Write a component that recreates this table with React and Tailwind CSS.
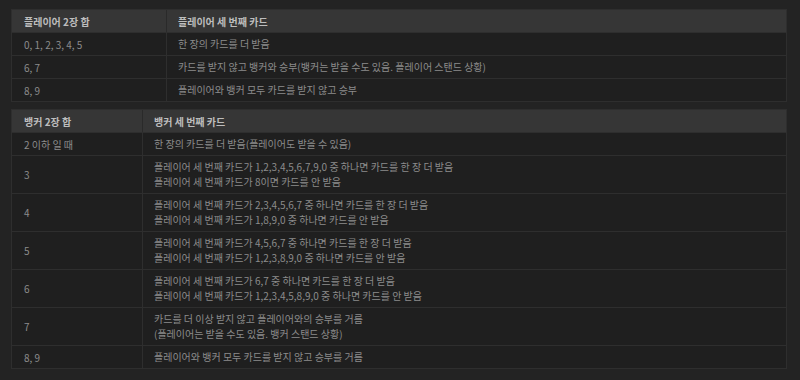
const F = { fontFamily: '"Noto Sans CJK KR", "Noto Sans", sans-serif' };

function Table({ w1, head, rows }) {
  return (
    <div className="border border-[#2e2e2e] bg-[#1f1f1f]">
      <div className="flex h-[22px] bg-[#363636] text-[10px] font-bold text-[#bdbdbd]">
        <div className="flex items-center pl-[12px] border-r border-[#2a2a2a]" style={{ width: w1 }}>{head[0]}</div>
        <div className="flex items-center pl-[11px] flex-1">{head[1]}</div>
      </div>
      {rows.map((r, i) => (
        <div key={i} className={`flex border-t border-[#2e2e2e] text-[10px] text-[#8c8c8c] ${r[2] ? 'h-[38px]' : 'h-[23px]'}`}>
          <div className="flex items-center pl-[12px] border-r border-[#2e2e2e]" style={{ width: w1 }}>{r[0]}</div>
          <div className="flex flex-col justify-center pl-[11px] flex-1 leading-[14.5px]">
            <div>{r[1]}</div>
            {r[2] && <div>{r[2]}</div>}
          </div>
        </div>
      ))}
    </div>
  );
}

export default function App() {
  return (
    <div className="w-[800px] h-[380px] bg-[#232323] pt-[9px] pl-[11px] pr-[13px]" style={F}>
      <Table
        w1={155}
        head={['플레이어 2장 합', '플레이어 세 번째 카드']}
        rows={[
          ['0, 1, 2, 3, 4, 5', '한 장의 카드를 더 받음'],
          ['6, 7', '카드를 받지 않고 뱅커와 승부(뱅커는 받을 수도 있음. 플레이어 스탠드 상황)'],
          ['8, 9', '플레이어와 뱅커 모두 카드를 받지 않고 승부'],
        ]}
      />
      <div className="h-[7px]" />
      <Table
        w1={131}
        head={['뱅커 2장 합', '뱅커 세 번째 카드']}
        rows={[
          ['2 이하 일 때', '한 장의 카드를 더 받음(플레이어도 받을 수 있음)'],
          ['3', '플레이어 세 번째 카드가 1,2,3,4,5,6,7,9,0 중 하나면 카드를 한 장 더 받음', '플레이어 세 번째 카드가 8이면 카드를 안 받음'],
          ['4', '플레이어 세 번째 카드가 2,3,4,5,6,7 중 하나면 카드를 한 장 더 받음', '플레이어 세 번째 카드가 1,8,9,0 중 하나면 카드를 안 받음'],
          ['5', '플레이어 세 번째 카드가 4,5,6,7 중 하나면 카드를 한 장 더 받음', '플레이어 세 번째 카드가 1,2,3,8,9,0 중 하나면 카드를 안 받음'],
          ['6', '플레이어 세 번째 카드가 6,7 중 하나면 카드를 한 장 더 받음', '플레이어 세 번째 카드가 1,2,3,4,5,8,9,0 중 하나면 카드를 안 받음'],
          ['7', '카드를 더 이상 받지 않고 플레이어와의 승부를 거름', '(플레이어는 받을 수도 있음. 뱅커 스탠드 상황)'],
          ['8, 9', '플레이어와 뱅커 모두 카드를 받지 않고 승부를 거름'],
        ]}
      />
    </div>
  );
}
